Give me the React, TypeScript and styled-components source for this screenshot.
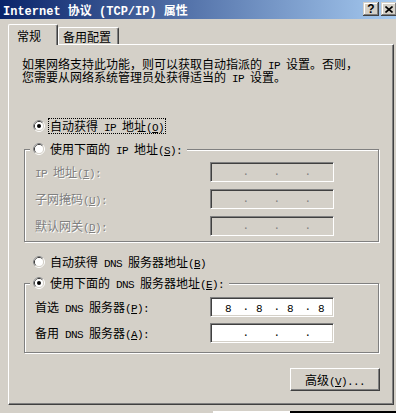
import React from "react";
import styled, { createGlobalStyle, css } from "styled-components";

const FACE = "#D4D0C8";

const Global = createGlobalStyle`
  html, body { margin: 0; padding: 0; background: ${FACE}; }
  body {
    font-family: "Noto Sans CJK SC", "Liberation Sans", sans-serif;
    font-size: 12px;
    color: #000;
  }
  * { box-sizing: border-box; }
`;

const Window = styled.div`
  width: 396px;
  height: 413px;
  overflow: hidden;
  background: ${FACE};
  display: flex;
  flex-direction: column;
`;

const TitleBar = styled.div`
  height: 19px;
  flex: none;
  display: flex;
  justify-content: space-between;
  padding-left: 3px;
  background: linear-gradient(to right, #0a246a, #a6caf0);
`;

const TitleText = styled.div`
  color: #fff;
  font-weight: bold;
  font-size: 12px;
  line-height: 19px;
  white-space: nowrap;
`;

const CaptionButtons = styled.div`
  display: flex;
  gap: 2px;
  margin: 2px -1px 0 0;
`;

const CaptionButton = styled.div`
  width: 16px;
  height: 14px;
  background: ${FACE};
  display: flex;
  align-items: center;
  justify-content: center;
  box-shadow: inset -1px -1px #404040, inset 1px 1px ${FACE},
    inset -2px -2px #808080, inset 2px 2px #fff;
  font-family: "Liberation Sans", sans-serif;
  font-weight: bold;
  font-size: 12px;
  line-height: 12px;
  color: #000;
`;

const Body = styled.div`
  padding-top: 5px;
  display: flex;
  flex-direction: column;
  flex: none;
`;

const TabStrip = styled.div`
  height: 20px;
  margin-left: 8px;
  display: flex;
  align-items: flex-end;
`;

const Tab = styled.div<{ $active?: boolean }>`
  position: relative;
  background: ${FACE};
  border-left: 1px solid #fff;
  border-top: 1px solid #fff;
  border-right: 1px solid #404040;
  border-radius: 2px 2px 0 0;
  box-shadow: inset -1px 0 #808080;
  white-space: nowrap;
  line-height: 16px;
  ${(p) =>
    p.$active
      ? css`
          height: 21px;
          width: 50px;
          padding: 3px 0 0 8px;
          margin-bottom: -1px;
          z-index: 1;
        `
      : css`
          height: 17px;
          width: 61px;
          padding: 1px 0 0 4px;
        `}
`;

const Panel = styled.div`
  margin-left: 8px;
  width: 386px;
  height: 361px;
  border-top: 1px solid #fff;
  border-left: 1px solid #fff;
  border-right: 1px solid #404040;
  border-bottom: 1px solid #404040;
  box-shadow: inset -1px -1px #808080;
  display: flex;
  flex-direction: column;
`;

const Desc = styled.div`
  margin: 12px 0 0 13px;
  line-height: 13px;
  white-space: nowrap;
`;

const OptionRow = styled.div<{ $mt?: number; $ml?: number }>`
  display: flex;
  align-items: center;
  height: 16px;
  margin-top: ${(p) => p.$mt ?? 0}px;
  margin-left: ${(p) => p.$ml ?? 0}px;
  white-space: nowrap;
`;

const Legend = styled(OptionRow)`
  width: fit-content;
  margin-top: -9px;
  margin-left: -5px;
  padding: 0 3px;
  background: ${FACE};
`;

const OptionLabel = styled.span<{ $focused?: boolean }>`
  margin-left: 3px;
  padding: 0 1px;
  line-height: 14px;
  border: 1px dotted ${(p) => (p.$focused ? "#000" : "transparent")};
`;

const Group = styled.div<{ $mt: number; $pb: number }>`
  margin: ${(p) => p.$mt}px 0 0 15px;
  width: 355px;
  border: 1px solid #808080;
  box-shadow: inset 1px 1px #fff, 1px 1px #fff;
  padding: 0 0 ${(p) => p.$pb}px 10px;
`;

const Fields = styled.div<{ $pt: number; $gap: number }>`
  display: flex;
  flex-direction: column;
  margin-top: ${(p) => p.$pt}px;
  gap: ${(p) => p.$gap}px;
`;

const FieldRow = styled.div`
  display: grid;
  grid-template-columns: 175px 124px;
  align-items: center;
  height: 20px;
`;

const FieldLabel = styled.span<{ $disabled?: boolean }>`
  line-height: 14px;
  white-space: nowrap;
  ${(p) =>
    p.$disabled &&
    css`
      color: #808080;
      text-shadow: 1px 1px 0 #fff;
    `}
`;

const IpBox = styled.div<{ $disabled?: boolean }>`
  height: 20px;
  width: 124px;
  border: 1px solid;
  border-color: #808080 #fff #fff #808080;
  box-shadow: inset 1px 1px #404040, inset -1px -1px ${FACE};
  background: ${(p) => (p.$disabled ? FACE : "#fff")};
  color: ${(p) => (p.$disabled ? "#808080" : "#000")};
  display: flex;
  align-items: center;
  padding-left: 5px;
  overflow: hidden;
  line-height: 14px;
`;

const IpPart = styled.span`
  width: 28px;
  flex: none;
  padding-right: 4px;
  text-align: center;
`;

const IpDot = styled.span`
  width: 3px;
  flex: none;
  display: flex;
  justify-content: center;
`;

const ButtonRow = styled.div`
  display: flex;
  justify-content: flex-end;
  margin-top: 15px;
  padding-right: 13px;
`;

const PushButton = styled.button`
  width: 90px;
  height: 23px;
  padding: 0;
  background: ${FACE};
  border: 1px solid;
  border-color: #fff #404040 #404040 #fff;
  box-shadow: inset -1px -1px #808080;
  font-family: inherit;
  font-size: 12px;
  line-height: 14px;
  color: #000;
`;

const Half = styled.span<{ $title?: boolean }>`
  font-family: "Liberation Mono", monospace;
  line-height: 0;
  ${(p) =>
    p.$title
      ? css`
          font-size: 12px;
          font-weight: bold;
        `
      : css`
          font-size: 11px;
          letter-spacing: -0.6px;
        `}
`;

const Spacer = styled.div`
  flex: 1;
`;

const BottomStrip = styled.div`
  height: 2px;
  flex: none;
  display: flex;
`;

const StripPart = styled.div<{ $w?: number; $c: string }>`
  background: ${(p) => p.$c};
  ${(p) => (p.$w ? `width: ${p.$w}px; flex: none;` : "flex: 1;")}
`;

function accel(p: string) {
  const i = p.indexOf("&");
  if (i < 0) return p;
  return (
    <>
      {p.slice(0, i)}
      <u>{p[i + 1]}</u>
      {p.slice(i + 2)}
    </>
  );
}

function Txt({ s, title }: { s: string; title?: boolean }) {
  const parts = s.split(/([\x00-\xff]+)/).filter(Boolean);
  return (
    <>
      {parts.map((p, i) =>
        /[\x00-\xff]/.test(p[0]) ? (
          <Half key={i} $title={title}>
            {accel(p)}
          </Half>
        ) : (
          <React.Fragment key={i}>{p}</React.Fragment>
        )
      )}
    </>
  );
}

function RadioGlyph({ checked }: { checked: boolean }) {
  return (
    <svg width="12" height="12" viewBox="0 0 12 12" style={{ flex: "none" }}>
      <circle cx="6" cy="6" r="5.5" fill="none" stroke="#fff" />
      <path d="M2.11 9.89A5.5 5.5 0 0 1 9.89 2.11" fill="none" stroke="#808080" />
      <circle cx="6" cy="6" r="4.5" fill="none" stroke={FACE} />
      <path d="M2.82 9.18A4.5 4.5 0 0 1 9.18 2.82" fill="none" stroke="#404040" />
      <circle cx="6" cy="6" r="4" fill="#fff" />
      {checked && <circle cx="6" cy="6" r="2" fill="#000" />}
    </svg>
  );
}

function Option({ label, checked, focused }: { label: string; checked?: boolean; focused?: boolean }) {
  return (
    <>
      <RadioGlyph checked={!!checked} />
      <OptionLabel $focused={focused}>
        <Txt s={label} />
      </OptionLabel>
    </>
  );
}

function IpInput({ values, disabled }: { values: string[]; disabled?: boolean }) {
  return (
    <IpBox $disabled={disabled}>
      {values.map((v, i) => (
        <React.Fragment key={i}>
          <IpPart>
            <Half>{v}</Half>
          </IpPart>
          {i < 3 && (
            <IpDot>
              <Half>.</Half>
            </IpDot>
          )}
        </React.Fragment>
      ))}
    </IpBox>
  );
}

function Field({ label, values, disabled }: { label: string; values: string[]; disabled?: boolean }) {
  return (
    <FieldRow>
      <FieldLabel $disabled={disabled}>
        <Txt s={label} />
      </FieldLabel>
      <IpInput values={values} disabled={disabled} />
    </FieldRow>
  );
}

function CloseGlyph() {
  return (
    <svg width="8" height="7" viewBox="0 0 8 7">
      <path d="M0.5 0.5L7.5 6.5M7.5 0.5L0.5 6.5" stroke="#000" strokeWidth="1.6" />
    </svg>
  );
}

const EMPTY = ["", "", "", ""];

export default function App() {
  return (
    <>
      <Global />
      <Window>
        <TitleBar>
          <TitleText>
            <Txt s="Internet 协议 (TCP/IP) 属性" title />
          </TitleText>
          <CaptionButtons>
            <CaptionButton>?</CaptionButton>
            <CaptionButton>
              <CloseGlyph />
            </CaptionButton>
          </CaptionButtons>
        </TitleBar>
        <Body>
          <TabStrip>
            <Tab $active>常规</Tab>
            <Tab>备用配置</Tab>
          </TabStrip>
          <Panel>
            <Desc>
              <Txt s="如果网络支持此功能，则可以获取自动指派的 IP 设置。否则，" />
              <br />
              <Txt s="您需要从网络系统管理员处获得适当的 IP 设置。" />
            </Desc>
            <OptionRow $mt={35} $ml={24}>
              <Option label="自动获得 IP 地址(&O)" checked focused />
            </OptionRow>
            <Group $mt={15} $pb={5}>
              <Legend>
                <Option label="使用下面的 IP 地址(&S):" />
              </Legend>
              <Fields $pt={5} $gap={7}>
                <Field label="IP 地址(&I):" values={EMPTY} disabled />
                <Field label="子网掩码(&U):" values={EMPTY} disabled />
                <Field label="默认网关(&D):" values={EMPTY} disabled />
              </Fields>
            </Group>
            <OptionRow $mt={12} $ml={24}>
              <Option label="自动获得 DNS 服务器地址(&B)" />
            </OptionRow>
            <Group $mt={13} $pb={9}>
              <Legend>
                <Option label="使用下面的 DNS 服务器地址(&E):" checked />
              </Legend>
              <Fields $pt={6} $gap={6}>
                <Field label="首选 DNS 服务器(&P):" values={["8", "8", "8", "8"]} />
                <Field label="备用 DNS 服务器(&A):" values={EMPTY} />
              </Fields>
            </Group>
            <ButtonRow>
              <PushButton>
                <Txt s="高级(&V)..." />
              </PushButton>
            </ButtonRow>
          </Panel>
        </Body>
        <Spacer />
        <BottomStrip>
          <StripPart $w={213} $c={FACE} />
          <StripPart $w={77} $c="#fff" />
          <StripPart $c="#000" />
        </BottomStrip>
      </Window>
    </>
  );
}
